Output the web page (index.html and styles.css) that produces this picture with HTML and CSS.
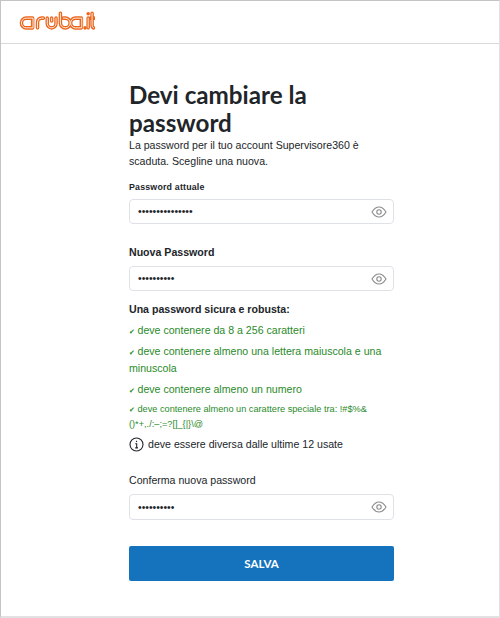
FILE: index.html
```html
<!DOCTYPE html>
<html lang="it">
<head>
<meta charset="utf-8">
<title>Devi cambiare la password</title>
<link rel="stylesheet" href="styles.css">
</head>
<body>
<div class="page">
  <header class="header">
    <svg class="logo" width="76" height="24" viewBox="0 0 78 24" aria-label="aruba.it">
      <g class="logo-outer">
        <path d="M14 7H7.500a5 5 0 0 0 0 10H14z"/><path d="M19 17v-6a4 4 0 0 1 4-4h2"/>
        <path d="M29 7v5.500a4.500 4.500 0 0 0 9 0V7"/><path d="M33.500 7v3"/>
        <path d="M42.500 2v10a5 5 0 1 0 5-5h-2"/>
        <path d="M64 7h-6a5 5 0 0 0 0 10h6z"/>
        <path d="M67.800 17v.1"/><path d="M71 7v10"/><path d="M71 2.500v.1"/>
        <path d="M75 2v12a3 3 0 0 0 1.500 3"/><path d="M73.500 7H77"/>
      </g>
      <g class="logo-inner">
        <path d="M14 7H7.500a5 5 0 0 0 0 10H14z"/><path d="M19 17v-6a4 4 0 0 1 4-4h2"/>
        <path d="M29 7v5.500a4.500 4.500 0 0 0 9 0V7"/><path d="M33.500 7v3"/>
        <path d="M42.500 2v10a5 5 0 1 0 5-5h-2"/>
        <path d="M64 7h-6a5 5 0 0 0 0 10h6z"/>
        <path d="M71 7v10"/>
        <path d="M75 2v12a3 3 0 0 0 1.500 3"/>
      </g>
    </svg>
  </header>
  <main class="content">
    <h1 class="title">Devi cambiare la password</h1>
    <p class="intro">La password per il tuo account Supervisore360 è scaduta. Scegline una nuova.</p>

    <label class="label label-small">Password attuale</label>
    <div class="field field-first">
      <span class="dots">•••••••••••••••</span>
      <svg class="eye" width="16" height="12" viewBox="0 0 16 12"><path d="M1 6c2-3.300 4.300-5 7-5s5 1.700 7 5c-2 3.300-4.300 5-7 5S3 9.300 1 6z"/><circle cx="8" cy="6" r="2.200"/></svg>
    </div>

    <label class="label label-new">Nuova Password</label>
    <div class="field field-new">
      <span class="dots">••••••••••</span>
      <svg class="eye" width="16" height="12" viewBox="0 0 16 12"><path d="M1 6c2-3.300 4.300-5 7-5s5 1.700 7 5c-2 3.300-4.300 5-7 5S3 9.300 1 6z"/><circle cx="8" cy="6" r="2.200"/></svg>
    </div>

    <h2 class="rules-title">Una password sicura e robusta:</h2>
    <ul class="rules">
      <li class="rule">deve contenere da 8 a 256 caratteri</li>
      <li class="rule">deve contenere almeno una lettera maiuscola e una minuscola</li>
      <li class="rule">deve contenere almeno un numero</li>
      <li class="rule rule-small">deve contenere almeno un carattere speciale tra: !#$%&amp;()*+,./:–;=?[]_{|}\@</li>
    </ul>
    <div class="info">
      <svg class="info-icon" width="15" height="15" viewBox="0 0 15 15"><circle cx="7.500" cy="7.500" r="6.500"/><path d="M6.300 6.700h1.400v4M6.200 10.900h2.800"/><path d="M7.500 3.800v1.300"/></svg>
      <span>deve essere diversa dalle ultime 12 usate</span>
    </div>

    <label class="label label-confirm">Conferma nuova password</label>
    <div class="field field-confirm">
      <span class="dots">••••••••••</span>
      <svg class="eye" width="16" height="12" viewBox="0 0 16 12"><path d="M1 6c2-3.300 4.300-5 7-5s5 1.700 7 5c-2 3.300-4.300 5-7 5S3 9.300 1 6z"/><circle cx="8" cy="6" r="2.200"/></svg>
    </div>

    <button class="save" type="button">SALVA</button>
  </main>
</div>
</body>
</html>
```

FILE: styles.css
```css
* { box-sizing: border-box; }
html, body { margin: 0; padding: 0; background: #fff; }
body { font-family: "Liberation Sans", Arial, sans-serif; color: #212529; }
.page {
  width: 500px;
  height: 618px;
  border: 1px solid #c4c4c4;
  border-right-color: #e2e2e2;
  border-bottom: 2px solid #e2e2e2;
  overflow: hidden;
}
.header {
  height: 43px;
  border-bottom: 1px solid #d9d9d9;
  padding: 10px 0 0 18px;
}
.logo { display: block; fill: none; stroke-linecap: round; stroke-linejoin: round; }
.logo-outer { stroke: #ec651b; stroke-width: 3.600; }
.logo-inner { stroke: #fff; stroke-width: .9; }
.content {
  width: 265px;
  margin-left: 128px;
  padding-top: 37px;
}
.title {
  margin: 0;
  font: 700 24.200px/28px Lato, sans-serif;
  color: #212529;
}
.intro {
  margin: 0;
  font-size: 10.600px;
  line-height: 16px;
}
.label { display: block; color: #212529; }
.label-small { margin-top: 11px; font-size: 8.800px; font-weight: 700; line-height: 14px; letter-spacing: .2px; }
.label-new { margin-top: 21px; font-size: 10.600px; font-weight: 700; line-height: 14px; }
.label-confirm { margin-top: 21px; font-size: 10.600px; line-height: 14px; }
.field {
  height: 25px;
  margin-top: 6px;
  padding: 0 6px 0 8px;
  border: 1px solid #dee2e6;
  border-radius: 4px;
  display: flex;
  align-items: center;
  justify-content: space-between;
}
.field-first { margin-top: 5px; }
.field-new { margin-top: 7px; }
.field-confirm { margin-top: 7px; height: 26px; }
.dots { font-size: 10.400px; color: #212529; }
.eye { fill: none; stroke: #8a8a8a; stroke-width: 1.100; }
.rules-title { margin: 11px 0 0; font-size: 10.600px; font-weight: 700; line-height: 14px; color: #212529; }
.rules { list-style: none; margin: 0; padding: 0; }
.rule { margin-top: 4px; font-size: 10.600px; line-height: 17px; color: #2a8a2a; }
.rule:first-child { margin-top: 6px; }
.rule::before {
  content: "✔";
  display: inline-block;
  width: 8.500px;
  line-height: 0;
  font-family: "DejaVu Sans", sans-serif;
  font-size: 7px;
}
.rule-small { font-size: 9.200px; line-height: 15px; }
.info { display: flex; align-items: center; gap: 4px; margin-top: 4px; font-size: 10.600px; line-height: 16px; color: #212529; }
.info-icon { flex: none; fill: none; stroke: #212529; stroke-width: 1.100; }
.save {
  display: block;
  width: 100%;
  height: 35px;
  margin-top: 26px;
  border: 0;
  border-radius: 2px;
  background: #1573bd;
  color: #fff;
  font: 700 11.500px Lato, sans-serif;
}
```
